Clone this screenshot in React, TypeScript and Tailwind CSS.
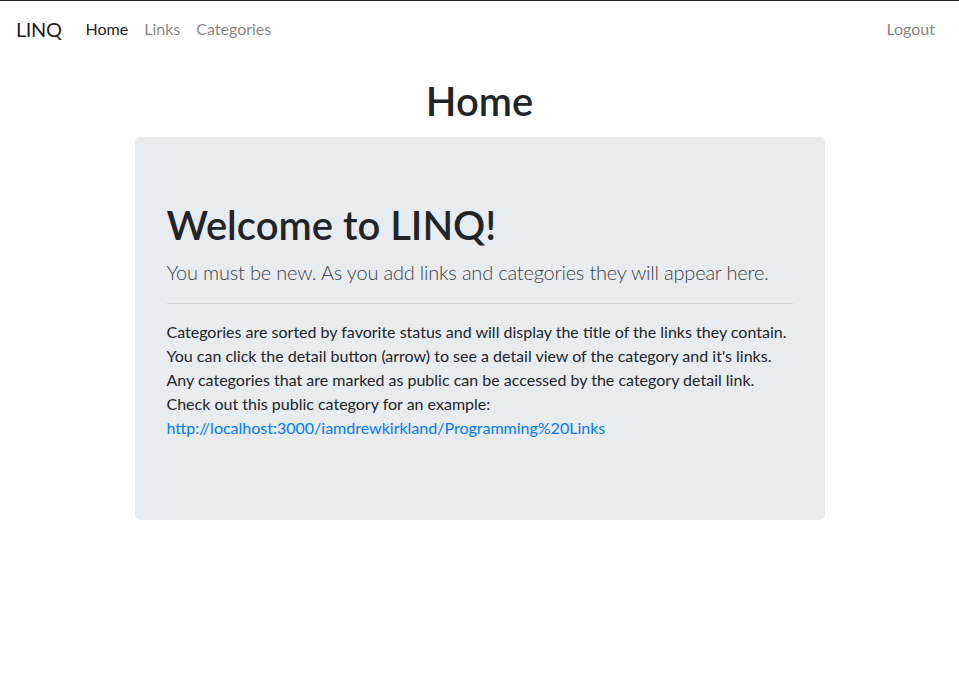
export default function App() {
  return (
    <div className="min-h-[696px] bg-white border-t border-[#212529] font-['Lato','Noto_Sans',sans-serif] text-[#212529]">
      {/* Navbar */}
      <nav className="flex items-center justify-between px-4 py-2 h-14">
        <div className="flex items-center">
          <a href="#" className="mr-4 text-[20px] leading-[30px] tracking-[-0.4px] text-[rgba(0,0,0,0.9)]">
            LINQ
          </a>
          <div className="flex items-center">
            <a href="#" className="px-2 py-2 text-base leading-6 text-[rgba(0,0,0,0.9)]">
              Home
            </a>
            <a href="#" className="px-2 py-2 text-base leading-6 text-[rgba(0,0,0,0.5)]">
              Links
            </a>
            <a href="#" className="px-2 py-2 text-base leading-6 text-[rgba(0,0,0,0.5)]">
              Categories
            </a>
          </div>
        </div>
        <a href="#" className="px-2 py-2 text-base leading-6 text-[rgba(0,0,0,0.5)]">
          Logout
        </a>
      </nav>

      {/* Content */}
      <div className="w-[720px] mx-auto px-[15px]">
        <h1 className="mt-5 mb-3 text-center text-[40px] leading-[48px] font-semibold">Home</h1>
        <div className="bg-[#e9ecef] rounded-[5px] px-8 py-16">
          <h1 className="mb-2 text-[40px] leading-[48px] font-semibold">Welcome to LINQ!</h1>
          <p className="mb-4 text-[20px] leading-[30px] font-light tracking-[-0.2px] text-[#3d4247]">
            You must be new. As you add links and categories they will appear here.
          </p>
          <hr className="my-4 border-t border-[rgba(0,0,0,0.1)]" />
          <p className="mb-4 text-base leading-6 whitespace-nowrap">
            Categories are sorted by favorite status and will display the title of the links they contain.
            <br />
            You can click the detail button (arrow) to see a detail view of the category and it's links.
            <br />
            Any categories that are marked as public can be accessed by the category detail link.
            <br />
            Check out this public category for an example:
            <br />
            <a href="#" className="text-[#007bff]">
              http://localhost:3000/iamdrewkirkland/Programming%20Links
            </a>
          </p>
        </div>
      </div>
    </div>
  );
}
